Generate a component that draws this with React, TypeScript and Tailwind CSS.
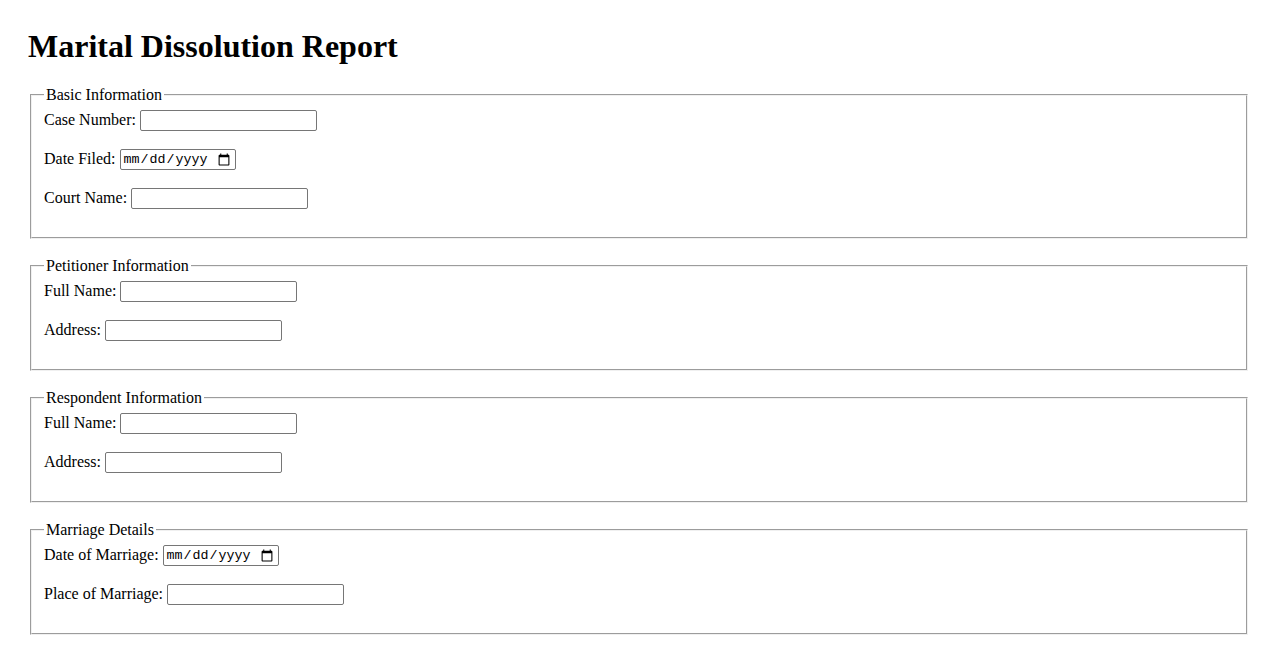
import React from "react";

type Field = { label: string; type: "text" | "date" };

const SECTIONS: { title: string; fields: Field[] }[] = [
  {
    title: "Basic Information",
    fields: [
      { label: "Case Number:", type: "text" },
      { label: "Date Filed:", type: "date" },
      { label: "Court Name:", type: "text" },
    ],
  },
  {
    title: "Petitioner Information",
    fields: [
      { label: "Full Name:", type: "text" },
      { label: "Address:", type: "text" },
    ],
  },
  {
    title: "Respondent Information",
    fields: [
      { label: "Full Name:", type: "text" },
      { label: "Address:", type: "text" },
    ],
  },
  {
    title: "Marriage Details",
    fields: [
      { label: "Date of Marriage:", type: "date" },
      { label: "Place of Marriage:", type: "text" },
    ],
  },
];

function Row({ field }: { field: Field }) {
  return (
    <div className="flex h-[21px] items-center gap-[4px]">
      <label className="mb-[2px] whitespace-nowrap">{field.label}</label>
      {field.type === "date" ? (
        <input
          type="date"
          className="h-[21px] w-[116px] rounded-[2px] border border-[#767676] bg-white px-[2px] font-['Liberation_Mono',monospace] text-[13.33px] text-black"
        />
      ) : (
        <input
          type="text"
          className="h-[21px] w-[177px] rounded-[2px] border border-[#767676] bg-white px-[2px] font-['Liberation_Sans',sans-serif] text-[13.33px] text-black"
        />
      )}
    </div>
  );
}

export default function App() {
  return (
    <div className="min-h-[650px] bg-white px-[28px] pt-[28px] font-['Liberation_Serif',serif] text-[16px] leading-[normal] text-black">
      <h1 className="mb-[21px] text-[32px] font-bold leading-[normal]">Marital Dissolution Report</h1>
      {SECTIONS.map((s) => (
        <fieldset
          key={s.title}
          className="mx-[2px] mb-[18.5px] border-2 border-[#f0f0f0] px-[12px] pb-[27.5px] [border-style:groove]"
        >
          <legend className="px-[2px] leading-[18px]">{s.title}</legend>
          <div className="flex flex-col gap-[18px] pt-[6px]">
            {s.fields.map((f) => (
              <Row key={f.label} field={f} />
            ))}
          </div>
        </fieldset>
      ))}
    </div>
  );
}
